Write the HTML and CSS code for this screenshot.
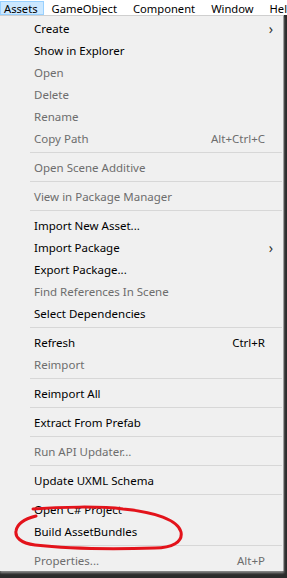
FILE: index.html
```html
<!DOCTYPE html>
<html>
<head>
<meta charset="utf-8">
<link rel="stylesheet" href="styles.css">
</head>
<body>
<div class="menubar">
  <span class="top active">Assets</span>
  <span class="top">GameObject</span>
  <span class="top">Component</span>
  <span class="top">Window</span>
  <span class="top">Hel</span>
</div>
<div class="dropdown">
  <div class="item"><span>Create</span><span class="arrow">›</span></div>
  <div class="item"><span>Show in Explorer</span></div>
  <div class="item off"><span>Open</span></div>
  <div class="item off"><span>Delete</span></div>
  <div class="item off"><span>Rename</span></div>
  <div class="item off"><span>Copy Path</span><span class="key">Alt+Ctrl+C</span></div>
  <div class="sep"></div>
  <div class="item off"><span>Open Scene Additive</span></div>
  <div class="sep"></div>
  <div class="item off"><span>View in Package Manager</span></div>
  <div class="sep"></div>
  <div class="item"><span>Import New Asset...</span></div>
  <div class="item"><span>Import Package</span><span class="arrow">›</span></div>
  <div class="item"><span>Export Package...</span></div>
  <div class="item off"><span>Find References In Scene</span></div>
  <div class="item"><span>Select Dependencies</span></div>
  <div class="sep"></div>
  <div class="item"><span>Refresh</span><span class="key">Ctrl+R</span></div>
  <div class="item off"><span>Reimport</span></div>
  <div class="sep"></div>
  <div class="item"><span>Reimport All</span></div>
  <div class="sep"></div>
  <div class="item"><span>Extract From Prefab</span></div>
  <div class="sep"></div>
  <div class="item off"><span>Run API Updater...</span></div>
  <div class="sep"></div>
  <div class="item"><span>Update UXML Schema</span></div>
  <div class="sep"></div>
  <div class="item"><span>Open C# Project</span></div>
  <div class="item"><span>Build AssetBundles</span></div>
  <div class="sep"></div>
  <div class="item off"><span>Properties...</span><span class="key">Alt+P</span></div>
  <svg class="circle" width="200" height="60" viewBox="0 0 200 60">
    <path d="M33 7 C60 5 100 4 123 7 C155 10 178 18 181 30 C183 40 172 46 155 46 C120 47 70 47 35 43 C20 41 15 35 16 29 C17 22 24 17 36 14" fill="none" stroke="#e3131b" stroke-width="3" stroke-linecap="round"/>
  </svg>
</div>
</body>
</html>
```
FILE: styles.css
```css
html, body {
  margin: 0;
  padding: 0;
}
body {
  width: 287px;
  height: 578px;
  background: #2b2b2b;
  font-family: "Noto Sans", "Open Sans", sans-serif;
  font-size: 11.5px;
  overflow: hidden;
}
.menubar {
  height: 15px;
  background: #ffffff;
  display: flex;
  align-items: center;
  white-space: nowrap;
  overflow: hidden;
  font-size: 11.2px;
}
.top {
  padding: 0 7px;
  height: 14px;
  line-height: 13px;
  color: #000;
  box-sizing: border-box;
  border: 1px solid transparent;
  flex-shrink: 0;
}
.top.active {
  background: #cce8ff;
  border-color: #99d1ff;
  padding: 0 5px 0 3px;
}
.dropdown {
  position: relative;
  width: 284px;
  height: 556px;
  box-sizing: border-box;
  background: #f0f0f0;
  border-top: 1px solid #cfcfcf;
  border-right: 1px solid #a0a0a0;
  padding-top: 1px;
  box-shadow: 0 2px 2px #8a8a8a;
}
.item {
  height: 22px;
  display: flex;
  align-items: center;
  padding-left: 34px;
  padding-right: 18px;
  color: #000;
  position: relative;
}
.item.off {
  color: #6d6d6d;
}
.key {
  margin-left: auto;
}
.arrow {
  position: absolute;
  right: 10px;
  font-size: 14px;
  color: #333;
}
.sep {
  height: 7px;
  display: flex;
  align-items: center;
  margin-left: 30px;
  margin-right: 1px;
}
.sep::before {
  content: "";
  flex: 1;
  height: 1px;
  background: #d7d7d7;
}
.circle {
  position: absolute;
  left: 0;
  top: 486px;
  pointer-events: none;
}
```
